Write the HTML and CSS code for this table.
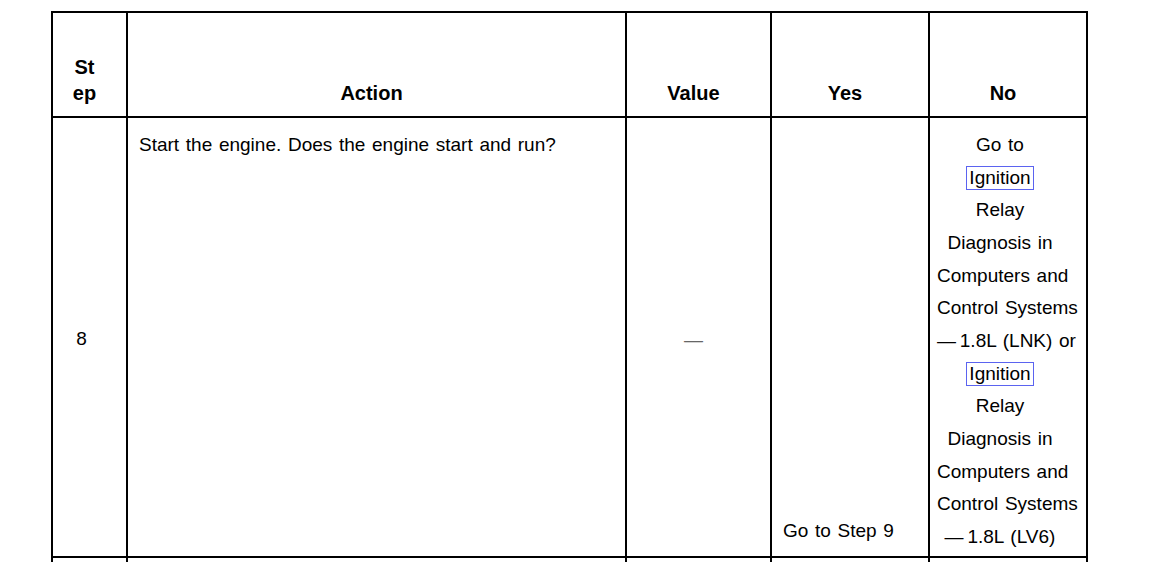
FILE: index.html
```html
<!DOCTYPE html>
<html lang="en">
<head>
<meta charset="utf-8">
<title>Diagnostic step</title>
<link rel="stylesheet" href="styles.css">
</head>
<body>
<div class="page">
  <div class="table" role="table">
    <div class="cell head head-step" role="columnheader">St<wbr>ep</div>
    <div class="cell head" role="columnheader">Action</div>
    <div class="cell head" role="columnheader">Value</div>
    <div class="cell head" role="columnheader">Yes</div>
    <div class="cell head" role="columnheader">No</div>

    <div class="cell body step" role="cell">8</div>
    <div class="cell body action" role="cell">Start the engine. Does the engine start and run?</div>
    <div class="cell body value" role="cell">—</div>
    <div class="cell body yes" role="cell">Go to Step 9</div>
    <div class="cell body no" role="cell">Go to<br><a class="link" href="#">Ignition</a><br>Relay<br>Diagnosis in<br>Computers and<br>Control Systems<br>—&#8201;1.8L (LNK) or<br><a class="link" href="#">Ignition</a><br>Relay<br>Diagnosis in<br>Computers and<br>Control Systems<br>—&#8201;1.8L (LV6)</div>

    <div class="cell next" role="cell"></div>
    <div class="cell next" role="cell"></div>
    <div class="cell next" role="cell"></div>
    <div class="cell next" role="cell"></div>
    <div class="cell next" role="cell"></div>
  </div>
</div>
</body>
</html>
```

FILE: styles.css
```css
html, body {
  margin: 0;
  padding: 0;
  background: #fff;
  overflow: hidden;
}

.page {
  height: 562px;
  overflow: hidden;
  padding: 11px 0 0 51px;
  box-sizing: border-box;
  font-family: "Liberation Sans", Arial, sans-serif;
  font-size: 19px;
  word-spacing: 1.4px;
  color: #000;
}

.table {
  display: grid;
  grid-template-columns: 75px 499px 145px 158px 158px;
  width: max-content;
  border-left: 2px solid #000;
  border-top: 2px solid #000;
}

.cell {
  box-sizing: border-box;
  border-right: 2px solid #000;
  border-bottom: 2px solid #000;
}

.head {
  height: 105px;
  display: flex;
  align-items: flex-end;
  justify-content: center;
  text-align: center;
  font-size: 20px;
  font-weight: bold;
  line-height: 26px;
  padding: 0 20px 10px 10px;
}

.head-step {
  padding-left: 12px;
  padding-right: 22px;
}

.body {
  line-height: 32.67px;
  padding: 11px 20px 10px 10px;
}

.step {
  display: flex;
  align-items: center;
  justify-content: center;
  padding-top: 14px;
  padding-left: 8px;
  padding-right: 24px;
}

.action {
  padding-left: 11px;
}

.value {
  display: flex;
  align-items: center;
  justify-content: center;
  padding-top: 16px;
  color: #666;
}

.yes {
  display: flex;
  align-items: flex-end;
  padding-left: 11px;
  padding-bottom: 8px;
}

.no {
  text-align: center;
  white-space: nowrap;
  padding: 11px 23px 2px 7px;
}

.link {
  color: #000;
  text-decoration: none;
  border: 1px solid #5b63f0;
  padding: 0 2px 1px;
}

.next {
  height: 40px;
}
```
